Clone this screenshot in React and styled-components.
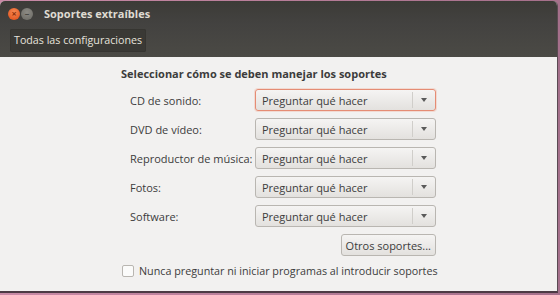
import styled, { createGlobalStyle } from "styled-components";

const Global = createGlobalStyle`
  html, body { margin: 0; padding: 0; background: #a8708c; }
  body { font-family: "Open Sans", "Noto Sans", sans-serif; }
`;

const Desk = styled.div`
  width: 560px;
  height: 295px;
  background: linear-gradient(90deg, #c98aa6, #a5708b);
  padding-top: 1px;
  box-sizing: border-box;
  overflow: hidden;
`;

const Win = styled.div`
  width: 558px;
  height: 292px;
  box-sizing: border-box;
  border-radius: 5px 5px 0 0;
  overflow: hidden;
  display: flex;
  flex-direction: column;
  background: #f2f1f0;
  border-right: 1px solid #5a4a52;
  border-bottom: 2px solid #4c3a44;
`;

const Header = styled.div`
  background: linear-gradient(#3c3b37 0%, #434240 40%, #4b4a45 100%);
  display: flex;
  flex-direction: column;
  height: 56px;
`;

const TitleBar = styled.div`
  height: 25px;
  display: flex;
  align-items: center;
  padding-left: 8px;
  gap: 1px;
`;

const WinBtn = styled.span`
  width: 12px;
  height: 12px;
  border-radius: 50%;
  background: ${(p) =>
    p.close
      ? "radial-gradient(circle at 50% 35%, #f78a52, #df4a16)"
      : "radial-gradient(circle at 50% 35%, #8c8a84, #6a6963)"};
  display: flex;
  align-items: center;
  justify-content: center;
  color: ${(p) => (p.close ? "#8a300c" : "#4a4945")};
  font-size: 9px;
  font-weight: bold;
  line-height: 1;
`;

const Title = styled.span`
  margin-left: 10px;
  color: #dfdbd2;
  font-weight: bold;
  font-size: 11px;
`;

const ToolBar = styled.div`
  flex: 1;
  display: flex;
  align-items: center;
  padding-left: 10px;
  padding-bottom: 2px;
`;

const ToolBtn = styled.div`
  background: #3a3935;
  border-radius: 2px;
  color: #e6e3dc;
  font-size: 10.7px;
  padding: 4px 4px 5px;
  box-shadow: inset 0 0 0 1px #363531;
`;

const Body = styled.div`
  flex: 1;
  display: flex;
  justify-content: center;
  padding-top: 9px;
  font-size: 11px;
  color: #3c3c3c;
`;

const Panel = styled.div`
  width: 315px;
  display: flex;
  flex-direction: column;
`;

const Heading = styled.div`
  font-weight: bold;
  margin-bottom: 8px;
  white-space: nowrap;
`;

const Grid = styled.div`
  display: grid;
  grid-template-columns: 125px 181px;
  row-gap: 7px;
  padding-left: 9px;
  align-items: center;
`;

const Label = styled.div`
  white-space: nowrap;
`;

const Combo = styled.div`
  height: 22px;
  box-sizing: border-box;
  border: 1px solid ${(p) => (p.focused ? "#e58c74" : "#b9b6b1")};
  border-radius: 3px;
  background: linear-gradient(#f5f4f3, #e3e1de);
  display: flex;
  align-items: center;
  box-shadow: ${(p) => (p.focused ? "0 0 0 1px rgba(240,150,120,0.25)" : "none")};
`;

const ComboText = styled.span`
  flex: 1;
  padding-left: 6px;
  white-space: nowrap;
`;

const Arrow = styled.span`
  width: 22px;
  height: 16px;
  border-left: 1px solid #d0ceca;
  display: flex;
  align-items: center;
  justify-content: center;
`;

const Tri = styled.span`
  width: 0;
  height: 0;
  border-left: 3.5px solid transparent;
  border-right: 3.5px solid transparent;
  border-top: 4px solid #5a5a5a;
`;

const BtnRow = styled.div`
  display: flex;
  justify-content: flex-end;
  margin-top: 7px;
`;

const Button = styled.div`
  height: 22px;
  box-sizing: border-box;
  border: 1px solid #b9b6b1;
  border-radius: 3px;
  background: linear-gradient(#f5f4f3, #e3e1de);
  padding: 0 4px;
  display: flex;
  align-items: center;
  white-space: nowrap;
`;

const Check = styled.label`
  display: flex;
  align-items: center;
  gap: 5px;
  margin-top: 8px;
  padding-left: 1px;
  white-space: nowrap;
  font-size: 10.75px;
`;

const Box = styled.span`
  flex-shrink: 0;
  width: 10px;
  height: 10px;
  border: 1px solid #b9b6b1;
  border-radius: 2px;
  background: #fbfbfa;
`;

const rows = [
  "CD de sonido:",
  "DVD de vídeo:",
  "Reproductor de música:",
  "Fotos:",
  "Software:",
];

export default function App() {
  return (
    <Desk>
      <Global />
      <Win>
        <Header>
          <TitleBar>
            <WinBtn close>×</WinBtn>
            <WinBtn>–</WinBtn>
            <Title>Soportes extraíbles</Title>
          </TitleBar>
          <ToolBar>
            <ToolBtn>Todas las configuraciones</ToolBtn>
          </ToolBar>
        </Header>
        <Body>
          <Panel>
            <Heading>Seleccionar cómo se deben manejar los soportes</Heading>
            <Grid>
              {rows.map((r, i) => [
                <Label key={r}>{r}</Label>,
                <Combo key={r + "c"} focused={i === 0}>
                  <ComboText>Preguntar qué hacer</ComboText>
                  <Arrow>
                    <Tri />
                  </Arrow>
                </Combo>,
              ])}
            </Grid>
            <BtnRow>
              <Button>Otros soportes...</Button>
            </BtnRow>
            <Check>
              <Box />
              Nunca preguntar ni iniciar programas al introducir soportes
            </Check>
          </Panel>
        </Body>
      </Win>
    </Desk>
  );
}
